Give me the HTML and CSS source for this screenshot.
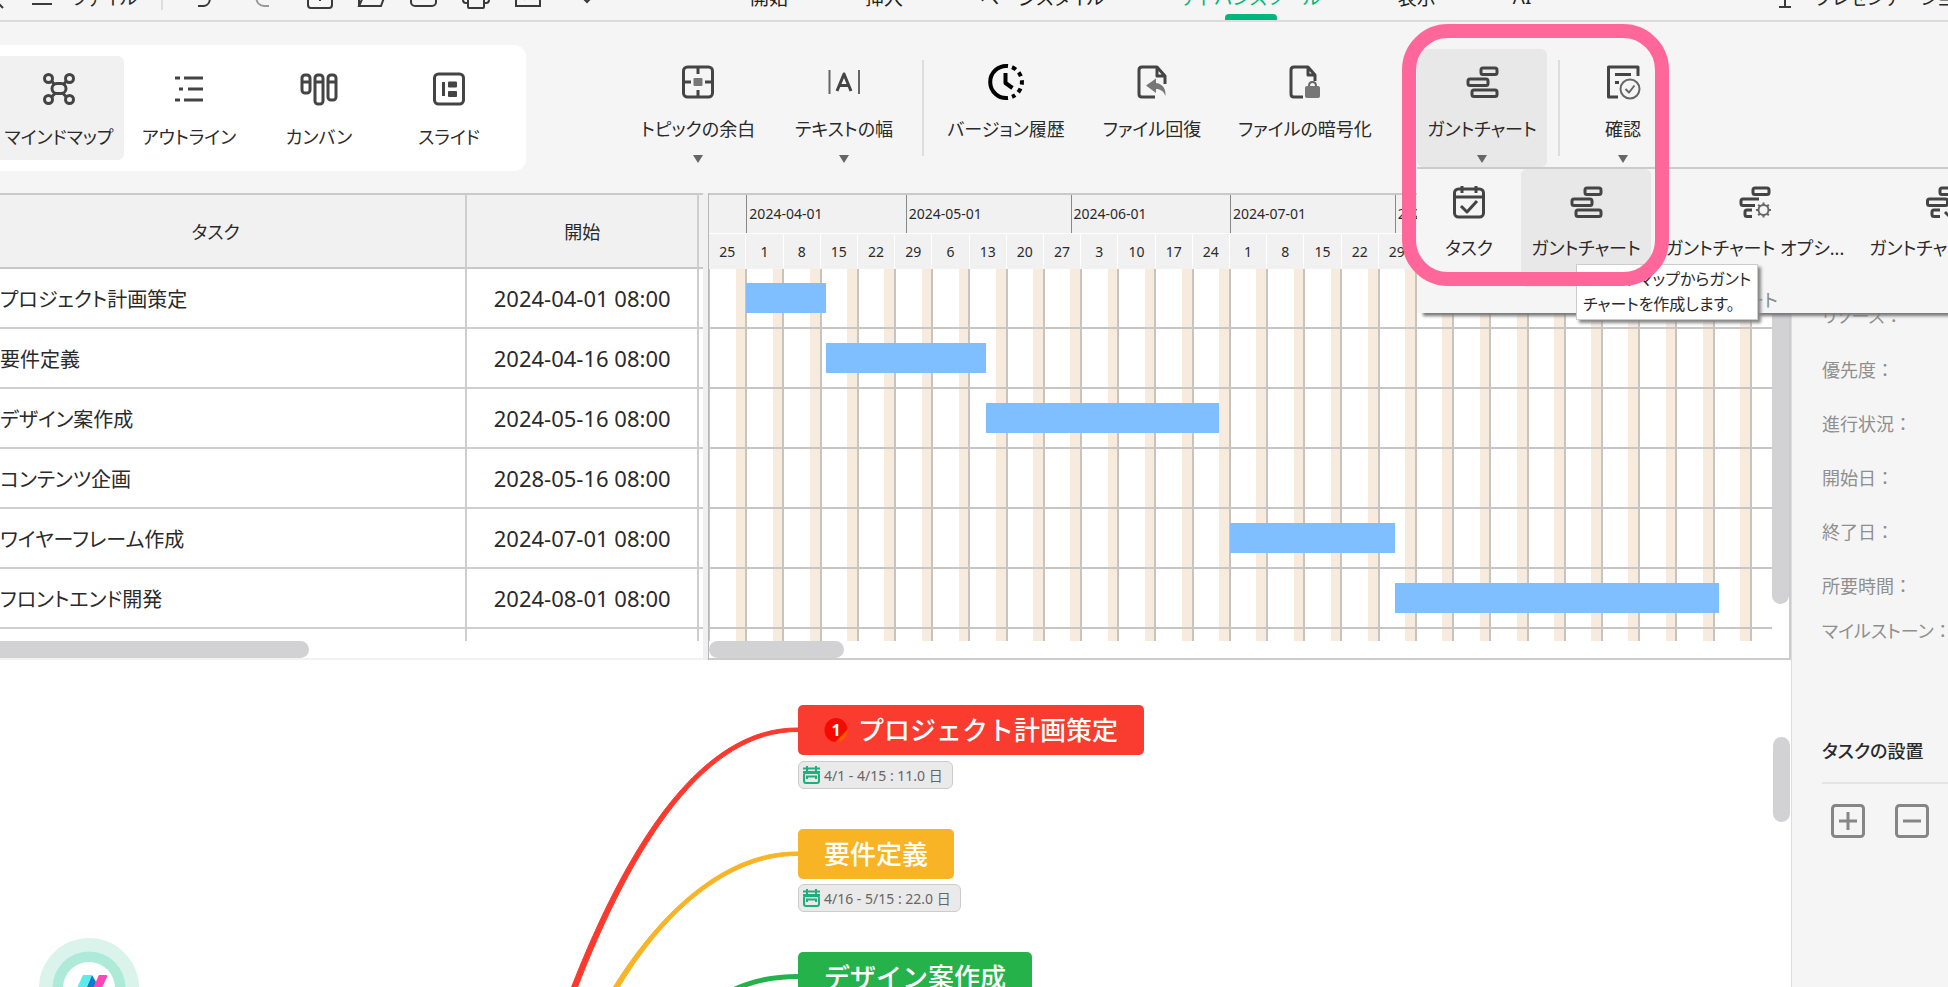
FILE: index.html
```html
<!DOCTYPE html>
<html lang="ja">
<head>
<meta charset="utf-8">
<title>マインドマップ - ガントチャート</title>
<link rel="stylesheet" href="styles.css">
</head>
<body>
<div class="app">
  <header class="topbar">
    <div class="topbar-left">
      <button class="icon-btn back" aria-label="戻る"><svg width="28" height="28" viewBox="0 0 28 28"><path d="M18 8l-8 8 9 9"/></svg></button>
      <button class="file-btn"><svg width="20" height="20" viewBox="0 0 20 20"><path d="M0 3h20M0 10h20M0 17h20"/></svg>ファイル</button>
      <span class="top-sep"></span>
      <button class="icon-btn wide" aria-label="元に戻す"><svg width="28" height="28" viewBox="0 0 28 28"><path d="M9 3L4 8l5 5M4 8h9c9 0 9 14 1 15h-6"/></svg></button>
      <button class="icon-btn wide dim" aria-label="やり直し"><svg width="28" height="28" viewBox="0 0 28 28"><path d="M19 3l5 5-5 5M24 8H15c-9 0-9 14 1 15h5"/></svg></button>
      <button class="icon-btn" aria-label="新規"><svg width="28" height="28" viewBox="0 0 28 28"><rect x="2" y="2" width="24" height="23" rx="3"/><path d="M14 8v10M9 13h10"/></svg></button>
      <button class="icon-btn" aria-label="開く"><svg width="28" height="28" viewBox="0 0 28 28"><path d="M1 23V4h9l3 4h10v4M1 23l5-11h21l-4 11z"/></svg></button>
      <button class="icon-btn" aria-label="保存"><svg width="28" height="28" viewBox="0 0 28 28"><rect x="1" y="2" width="25" height="21" rx="4"/></svg></button>
      <button class="icon-btn" aria-label="印刷"><svg width="28" height="28" viewBox="0 0 28 28"><path d="M6 9V2h16v7M6 20H4q-3 0-3-3V9h26v8q0 3-3 3h-2"/><rect x="6" y="14" width="16" height="11" rx="1"/></svg></button>
      <button class="icon-btn" aria-label="書き出し"><svg width="28" height="28" viewBox="0 0 28 28"><path d="M16 2H2v21h24V13M10 17c1-7 5-10 14-10M20 3l4 4-4 4"/></svg></button>
      <button class="icon-btn" aria-label="その他"><svg width="28" height="28" viewBox="0 0 28 28"><path d="M16 14l5 5 5-5"/></svg></button>
    </div>
    <nav class="tabs">
      <a href="#home">開始</a>
      <a href="#insert">挿入</a>
      <a href="#page">ページスタイル</a>
      <a href="#advance" class="current">アドバンスツール</a>
      <a href="#view">表示</a>
      <a href="#ai">AI</a>
    </nav>
    <button class="present"><svg width="14" height="28" viewBox="0 0 14 28"><path d="M7 2v22M1 24h12"/></svg>プレゼンテーション</button>
  </header>

  <section class="ribbon">
    <div class="views">
      <button class="tool view active">
        <svg class="ico" viewBox="0 0 32 32"><circle cx="5.500" cy="5.500" r="4"/><circle cx="26.500" cy="5.500" r="4"/><circle cx="5.500" cy="26.500" r="4"/><circle cx="26.500" cy="26.500" r="4"/><rect x="9" y="10.500" width="14" height="10" rx="5"/><path d="M8.500 8l3.500 4M23.500 8L20 12M8.500 24l4-4M23.500 24l-4-4"/></svg>
        <span>マインドマップ</span>
      </button>
      <button class="tool view">
        <svg class="ico" viewBox="0 0 32 32"><path d="M2 5h5M11 5h19M6 16h4M15 16h15M2 27h5M11 27h19"/></svg>
        <span>アウトライン</span>
      </button>
      <button class="tool view">
        <svg class="ico wide-ico" viewBox="0 0 38 32"><rect x="2" y="2" width="8" height="18" rx="3"/><rect x="15" y="2" width="8" height="29" rx="3"/><rect x="28" y="2" width="8" height="25" rx="3"/><path d="M2 9h8M15 9h8M28 9h8"/></svg>
        <span>カンバン</span>
      </button>
      <button class="tool view">
        <svg class="ico" viewBox="0 0 32 32"><rect x="1.500" y="1" width="29" height="30" rx="4"/><path d="M10.500 9v14"/><rect class="solid" x="15" y="8.500" width="9" height="6" rx="1"/><rect class="solid" x="15" y="18" width="9" height="6" rx="1"/></svg>
        <span>スライド</span>
      </button>
    </div>

    <div class="tools">
      <button class="tool">
        <svg class="ico" viewBox="0 0 32 32"><rect x="1.500" y="1" width="29" height="30" rx="4"/><path d="M16 1v7M16 24v7M1.500 16H9M23 16h7.500"/><rect class="soft" x="11.500" y="12" width="9" height="8" rx="1"/></svg>
        <span>トピックの余白</span><i class="caret"></i>
      </button>
      <button class="tool">
        <svg class="ico" viewBox="0 0 32 32"><path class="thin" d="M1.500 4v24M31 4v24"/><path d="M9 25L16 8l7 17M11.500 19.500h9"/></svg>
        <span>テキストの幅</span><i class="caret"></i>
      </button>
      <span class="sep"></span>
      <button class="tool">
        <svg class="ico clock" viewBox="0 0 36 36"><path d="M20 2.100a16 16 0 1 0 0 31.800"/><path d="M17.500 9v10l7 5"/><path stroke-dasharray="4.500 4" d="M24 3.200a16 16 0 0 1 0 29.600"/></svg>
        <span>バージョン履歴</span>
      </button>
      <button class="tool">
        <svg class="ico" viewBox="0 0 32 32"><path d="M19 31H6q-3 0-3-3V4q0-3 3-3h15l8 9v8M21 1v9h8"/><path class="soft" d="M10 19.500l10-7v4.500c7 1 10 6 9.500 13-2-5-5-7-9.500-7v4z"/></svg>
        <span>ファイル回復</span>
      </button>
      <button class="tool long">
        <svg class="ico" viewBox="0 0 32 32"><path d="M14 31H5q-3 0-3-3V4q0-3 3-3h14l7 8v6M19 1v8h7"/><path class="thin" d="M20 22v-2q0-4 3.500-4t3.500 4v2"/><rect class="soft" x="16" y="20" width="15" height="12" rx="2"/></svg>
        <span>ファイルの暗号化</span>
      </button>

      <div class="menu-wrap">
        <button class="tool gantt-btn active" aria-expanded="true">
          <svg class="ico" viewBox="0 0 32 32"><rect x="15" y="2" width="16" height="6.500" rx="2"/><rect x="2" y="13" width="20" height="6.500" rx="2"/><rect x="6" y="24" width="25" height="6.500" rx="2"/></svg>
          <span>ガントチャート</span><i class="caret"></i>
        </button>

        <div class="menu">
          <div class="menu-items">
            <button class="tool item-task">
              <svg class="ico" viewBox="0 0 32 32"><rect x="1.500" y="3" width="29" height="28" rx="4"/><path d="M1.500 11h29M9 0v7M23 0v7M8 20l6 6 10-11"/></svg>
              <span>タスク</span>
            </button>
            <button class="tool gantt-btn active">
              <svg class="ico" viewBox="0 0 32 32"><rect x="15" y="2" width="16" height="6.500" rx="2"/><rect x="2" y="13" width="20" height="6.500" rx="2"/><rect x="6" y="24" width="25" height="6.500" rx="2"/></svg>
              <span>ガントチャート</span>
            </button>
            <button class="tool item-option">
              <svg class="ico" viewBox="0 0 32 32"><rect x="14" y="2" width="16" height="6.500" rx="2"/><path d="M20 13H4q-2 0-2 2v2.500q0 2 2 2h12M13 24H8q-2 0-2 2v2.500q0 2 2 2h5"/><circle class="thin" cx="24.500" cy="24" r="5"/><path class="thin" d="M24.500 16.500V19M24.500 29v2.500M17 24h2.500M29.500 24H32M19.200 18.700l1.800 1.800M28 27.500l1.800 1.800M29.800 18.700L28 20.500M21 27.500l-1.800 1.800"/></svg>
              <span>ガントチャート オプシ...</span>
            </button>
            <button class="tool item-export">
              <svg class="ico" viewBox="0 0 32 32"><rect x="14" y="2" width="16" height="6.500" rx="2"/><rect x="1.500" y="13" width="20" height="6.500" rx="2"/><path d="M14 24H8q-2 0-2 2v2.500q0 2 2 2h6M24 18v12M19 26l5 5 5-5"/></svg>
              <span>ガントチャート出力</span>
            </button>
          </div>
          <p class="menu-title">ガントチャート</p>
        </div>
        <div class="tooltip" role="tooltip">マインドマップからガント<br>チャートを作成します。</div>
        <div class="highlight"></div>
      </div>

      <span class="sep"></span>
      <button class="tool check-btn">
        <svg class="ico" viewBox="0 0 32 32"><path d="M11 31H1.500V1H31v9M8 8.500h16M8 16.500h4"/><circle class="thin" cx="23" cy="23" r="9.500"/><path class="thin" d="M18.500 23l3.500 3.500 5.500-7"/></svg>
        <span>確認</span><i class="caret"></i>
      </button>
    </div>
  </section>

  <div class="workspace">
    <main class="center">
      <section class="planner">
        <div class="sheet-pane">
          <table class="sheet">
            <colgroup><col class="c-task"><col class="c-start"><col class="c-rest"></colgroup>
            <thead><tr><th class="h-task">タスク</th><th>開始</th><th></th></tr></thead>
            <tbody>
              <tr><td>プロジェクト計画策定</td><td class="date">2024-04-01 08:00</td><td></td></tr>
              <tr><td>要件定義</td><td class="date">2024-04-16 08:00</td><td></td></tr>
              <tr><td>デザイン案作成</td><td class="date">2024-05-16 08:00</td><td></td></tr>
              <tr><td>コンテンツ企画</td><td class="date">2028-05-16 08:00</td><td></td></tr>
              <tr><td>ワイヤーフレーム作成</td><td class="date">2024-07-01 08:00</td><td></td></tr>
              <tr><td>フロントエンド開発</td><td class="date">2024-08-01 08:00</td><td></td></tr>
              <tr class="tail"><td></td><td></td><td></td></tr>
            </tbody>
          </table>
          <div class="hscroll sheet-scroll"></div>
        </div>
        <div class="splitter"></div>
        <div class="gantt">
          <div class="gantt-head">
            <div class="months"><span></span><span>2024-04-01</span><span>2024-05-01</span><span>2024-06-01</span><span>2024-07-01</span><span>2024-08-01</span></div>
            <div class="weeks"><span>25</span><span>1</span><span>8</span><span>15</span><span>22</span><span>29</span><span>6</span><span>13</span><span>20</span><span>27</span><span>3</span><span>10</span><span>17</span><span>24</span><span>1</span><span>8</span><span>15</span><span>22</span><span>29</span><span>5</span><span>12</span><span>19</span><span>26</span><span>2</span><span>9</span><span>16</span><span>23</span><span>30</span><span></span></div>
          </div>
          <div class="gantt-body">
            <div class="plot">
              <div class="lane"><div class="bar" style="grid-column: 8 / 23"></div></div>
              <div class="lane"><div class="bar" style="grid-column: 23 / 53"></div></div>
              <div class="lane"><div class="bar" style="grid-column: 53 / 97"></div></div>
              <div class="lane"></div>
              <div class="lane"><div class="bar" style="grid-column: 99 / 130"></div></div>
              <div class="lane"><div class="bar" style="grid-column: 130 / 191"></div></div>
            </div>
            <div class="vscroll"></div>
          </div>
          <div class="hscroll gantt-scroll"></div>
        </div>
      </section>

      <section class="canvas">
        <svg class="links" width="260" height="330" viewBox="540 661 260 330">
          <path stroke="#fa3a2f" fill="#fa3a2f" stroke-width="1" d="M798 729C704 728 630 838 570 992L576 992C634 842 706 732 798 732.500Z"/>
          <path stroke="#f8b425" fill="#f8b425" stroke-width="1" d="M798 853C725 852 659 913 611 992L617 992C661 917 726 856 798 856.500Z"/>
          <path stroke="#26b24b" fill="none" stroke-width="5" d="M798 977.500C775 977.500 755 981 735 990"/>
        </svg>
        <div class="node node-1"><svg width="24" height="26" viewBox="0 0 24 26"><defs><linearGradient id="g" x1="0" y1="0" x2="1" y2="1"><stop offset=".72" stop-color="#f40a00"/><stop offset=".76" stop-color="#ff5a00"/></linearGradient></defs><ellipse cx="12" cy="13" rx="11.500" ry="12" fill="url(#g)"/><text x="12" y="19" text-anchor="middle" class="badge-num">1</text></svg>プロジェクト計画策定</div>
        <div class="tag tag-1"><svg width="17" height="18" viewBox="0 0 17 18"><path d="M0 2.500h17M0 6h17M4 0v5M13 0v5M4 13v-2.500h9V13"/><rect x="1" y="7" width="15" height="10" rx="2"/></svg>4/1 - 4/15 : 11.0 日</div>
        <div class="node node-2">要件定義</div>
        <div class="tag tag-2"><svg width="17" height="18" viewBox="0 0 17 18"><path d="M0 2.500h17M0 6h17M4 0v5M13 0v5M4 13v-2.500h9V13"/><rect x="1" y="7" width="15" height="10" rx="2"/></svg>4/16 - 5/15 : 22.0 日</div>
        <div class="node node-3">デザイン案作成</div>
        <button class="assistant" aria-label="アシスタント"><svg width="100" height="100" viewBox="0 0 100 100"><circle cx="50" cy="50" r="50" fill="#daf3eb"/><circle cx="50" cy="50" r="36.500" fill="#aeead8"/><circle cx="50" cy="50" r="26" fill="#fff"/><path fill="#5cebeb" d="M44 37h9l-12 26h-9z"/><path fill="#0a7fce" d="M53 37l4 7-6 17-7-3z"/><path fill="#ff45b8" d="M60 37h7q2 0 1 2L57 63h-9z"/></svg></button>
        <div class="canvas-scroll"></div>
      </section>
    </main>

    <aside class="side">
      <ul class="props">
        <li>リソース<span>：</span></li><li>優先度<span>：</span></li><li>進行状況<span>：</span></li><li>開始日<span>：</span></li><li>終了日<span>：</span></li><li>所要時間<span>：</span></li><li class="last">マイルストーン<span>：</span></li>
      </ul>
      <h2>タスクの設置</h2>
      <div class="side-actions">
        <button aria-label="追加"><svg width="34" height="34" viewBox="0 0 34 34"><rect x="1.500" y="1.500" width="31" height="31" rx="3"/><path d="M8 17h18M17 8v18"/></svg></button>
        <button aria-label="削除"><svg width="34" height="34" viewBox="0 0 34 34"><rect x="1.500" y="1.500" width="31" height="31" rx="3"/><path d="M8 17h18"/></svg></button>
      </div>
    </aside>
  </div>
</div>
</body>
</html>
```

FILE: styles.css
```css
* { box-sizing: border-box; }

body {
  margin: 0;
  background: #f5f5f5;
  color: #2a2a2a;
  font-family: "Noto Sans", "Noto Sans CJK JP", sans-serif;
  font-size: 18px;
  font-feature-settings: "palt";
  overflow: hidden;
}

button {
  margin: 0;
  padding: 0;
  border: 0;
  background: none;
  color: inherit;
  font: inherit;
  font-feature-settings: inherit;
  white-space: nowrap;
}

svg { display: block; flex: none; overflow: visible; }

.app {
  display: flex;
  flex-direction: column;
  height: 100vh;
  overflow: hidden;
}

/* top bar, scrolled partly out of view */
.topbar {
  display: flex;
  align-items: center;
  flex: none;
  height: 48px;
  margin-top: -26px;
  border-bottom: 2px solid #dcdcdc;
  font-size: 19px;
}
.topbar svg {
  fill: none;
  stroke: #3a3a3a;
  stroke-width: 2;
}
.topbar-left {
  display: flex;
  align-items: center;
  flex: none;
  gap: 24px;
  width: 750px;
}
.back { margin-left: -16px; margin-right: -4px; }
.file-btn { display: flex; align-items: center; gap: 20px; margin-right: -1px; }
.top-sep { width: 2px; height: 26px; background: #ddd; margin-right: 3px; }
.icon-btn.wide { margin-right: 6px; }
.icon-btn.dim svg { stroke: #999; }

.tabs { display: flex; align-self: stretch; gap: 77px; }
.tabs a {
  position: relative;
  display: flex;
  align-items: center;
  color: #222;
  text-decoration: none;
  white-space: nowrap;
}
.tabs .current { color: #00b67a; }
.tabs .current::after {
  content: "";
  position: absolute;
  left: calc(50% - 26px);
  bottom: 0;
  width: 52px;
  height: 6px;
  border-radius: 4px 4px 0 0;
  background: #00b67a;
}
.present {
  display: flex;
  align-items: center;
  justify-content: flex-start;
  flex: none;
  gap: 23px;
  width: 170px;
  margin-left: auto;
}

/* ribbon */
.ribbon {
  display: flex;
  align-items: flex-start;
  flex: none;
  height: 171px;
}
.views {
  display: flex;
  flex: none;
  margin: 23px 0 0 -6px;
  padding: 11px 12px 11px 0;
  border-radius: 0 12px 12px 0;
  background: #fff;
}
.tool {
  display: flex;
  flex-direction: column;
  align-items: center;
  flex: none;
  width: 146px;
  height: 118px;
  padding-top: 17px;
  border-radius: 6px;
  line-height: 24px;
}
.tool span { margin-top: 19px; }
.tool.view { width: 130px; height: 104px; }
.tool.view span { margin-top: 20px; }
.tool.active { background: #e8e8e8; }
.tool.view.active { background: #f1f1f1; }

.ico {
  width: 32px;
  height: 32px;
  fill: none;
  stroke: #444;
  stroke-width: 3;
  stroke-linejoin: round;
}
.wide-ico { width: 38px; }
.ico .thin { stroke: #666; stroke-width: 2; }
.ico .solid { fill: #444; stroke: none; }
.ico .soft { fill: #777; stroke: none; }
.ico.clock { width: 36px; height: 36px; margin: -2px; stroke: #000; stroke-width: 4; }
.caret {
  width: 10px;
  height: 8px;
  margin-top: 14px;
  background: #666;
  clip-path: polygon(0 0, 100% 0, 50% 100%);
}

.tools { display: flex; margin: 27px 0 0 99px; }
.sep { flex: none; width: 2px; height: 96px; margin: 11px 9px 0 5px; background: #ddd; }
.tool.long { width: 160px; }
.tool.gantt-btn { width: 130px; }
.tool.check-btn { width: 108px; }
.menu-wrap { position: relative; margin: 0 6px 0 32px; }

.menu {
  position: absolute;
  z-index: 2;
  top: 118px;
  left: 0;
  width: 612px;
  height: 146px;
  border-top: 2px solid #cbcbcb;
  background: #f5f5f5;
  box-shadow: 6px 3px 3px #777;
}
.menu-items { display: flex; }
.item-task.tool { width: 104px; }
.item-option.tool { width: 208px; }
.item-export.tool { width: 166px; }
.menu .tool span { margin-top: 18px; }
.menu-title {
  margin: 0;
  color: #8a8a8a;
  text-align: center;
  line-height: 26px;
}
.tooltip {
  position: absolute;
  z-index: 3;
  top: 215px;
  left: 159px;
  padding: 2px 6px;
  border: 1px solid #ccc;
  background: #fff;
  box-shadow: 3px 3px 3px #888;
  font-size: 16px;
  line-height: 25px;
  white-space: nowrap;
}
.highlight {
  position: absolute;
  z-index: 4;
  top: -25px;
  left: -15px;
  width: 267px;
  height: 262px;
  border: 14px solid #ff6699;
  border-radius: 46px;
  pointer-events: none;
}

/* work area */
.workspace { display: flex; flex: 1; min-height: 0; }
.center { display: flex; flex-direction: column; flex: 1; min-width: 0; }

.planner {
  display: grid;
  grid-template-columns: minmax(0, 13fr) 6px minmax(0, 20fr);
  flex: none;
  background: #fff;
}
.sheet-pane { border-bottom: 2px solid #f2f2f2; }
.sheet {
  width: 100%;
  table-layout: fixed;
  border-collapse: separate;
  border-spacing: 0;
}
.c-start { width: 232px; }
.c-rest { width: 4px; }
.sheet th {
  height: 76px;
  padding: 0;
  border-top: 2px solid #c9c9c9;
  border-bottom: 2px solid #c9c9c9;
  background: #f1f1f1;
  font-weight: 400;
}
.sheet .h-task { padding-right: 34px; }
.sheet td {
  height: 60px;
  padding: 0;
  border-bottom: 2px solid #cecece;
  font-size: 20px;
  white-space: nowrap;
}
.sheet th:not(:last-child), .sheet td:not(:last-child) { border-right: 2px solid #cecece; }
.sheet .date { font-size: 22px; text-align: center; }
.sheet .tail td { height: 12px; border-bottom: 0; }

.hscroll { height: 17px; background: #d2d2d4; }
.sheet-scroll { width: 44%; border-radius: 0 9px 9px 0; }
.gantt-scroll { width: 135px; border-radius: 9px; }

.splitter { border-right: 1px solid #b8b8b8; background: #f0f0f0; }

.gantt {
  border-right: 2px solid #ccc;
  border-bottom: 2px solid #ccc;
  font-size: 14px;
}
.gantt-head {
  height: 76px;
  padding-right: 17px;
  border-top: 2px solid #c9c9c9;
  background: #f1f1f1;
}
.months {
  display: grid;
  grid-template-columns: 7fr 30fr 31fr 30fr 31fr 71fr;
  height: 38px;
  line-height: 38px;
}
.months span { min-width: 0; padding-left: 2px; }
.months span + span { border-left: 1px solid #888; }
.weeks {
  display: grid;
  grid-template-columns: repeat(28, minmax(0, 7fr)) minmax(0, 4fr);
  height: 36px;
  border-top: 1px solid #fff;
  line-height: 36px;
  text-align: center;
}
.weeks span { border-right: 1px solid #fff; }
.gantt-body { display: grid; grid-template-columns: minmax(0, 1fr) 17px; }
/* one tile is a week: five white days, a tinted weekend, half a line on each side */
.plot {
  padding-bottom: 12px;
  background: repeating-linear-gradient(to right, #c9c3bd 0 1px, #fff 1px 2.5%, #f7ebde 2.5% calc(3.5% - 1px), #c9c3bd calc(3.5% - 1px) 3.5%);
}
.lane {
  display: grid;
  grid-template-columns: repeat(200, minmax(0, 1fr));
  height: 60px;
  border-bottom: 2px solid #c8c6c4;
}
.bar { height: 30px; margin-top: 14px; background: #80bfff; }
.vscroll { height: 335px; border-radius: 0 0 9px 9px; background: #d2d2d4; }

/* mind map */
.canvas {
  position: relative;
  flex: 1;
  min-height: 0;
  overflow: hidden;
  background: #fff;
}
.links { position: absolute; left: 540px; top: 0; }
.node {
  position: absolute;
  left: 798px;
  display: flex;
  align-items: center;
  gap: 10px;
  height: 50px;
  padding: 0 26px;
  border-radius: 5px;
  color: #fff;
  font-size: 26px;
  font-weight: 500;
  font-feature-settings: normal;
  line-height: 48px;
  white-space: nowrap;
}
.node-1 { top: 45px; background: #fa3b2f; }
.node-2 { top: 169px; background: #f8b425; }
.node-3 { top: 292px; background: #26b24b; }
.badge-num { fill: #fff; font-size: 16px; font-weight: 700; }
.tag {
  position: absolute;
  left: 798px;
  display: flex;
  align-items: center;
  gap: 4px;
  height: 28px;
  padding: 0 9px 0 4px;
  border: 1px solid #ccc;
  border-radius: 6px;
  background: #eaeaea;
  color: #666;
  font-size: 14px;
  white-space: nowrap;
}
.tag svg { fill: none; stroke: #1faf7f; stroke-width: 2; }
.tag-1 { top: 101px; }
.tag-2 { top: 224px; }
.assistant { position: absolute; left: 39px; top: 278px; }
.canvas-scroll {
  position: absolute;
  right: 1px;
  top: 77px;
  width: 17px;
  height: 85px;
  border-radius: 9px;
  background: #d2d2d4;
}

/* property panel */
.side {
  flex: 0 0 157px;
  padding: 96px 0 0 30px;
  border-left: 1px solid #ddd;
  overflow: hidden;
}
.props {
  margin: 0;
  padding: 0;
  color: #8f8f8f;
  line-height: 54px;
  list-style: none;
  white-space: nowrap;
}
.props span { font-feature-settings: normal; }
.props .last { line-height: 36px; }
.side h2 {
  margin: 90px 0 20px;
  padding-bottom: 19px;
  border-bottom: 2px solid #e4e4e4;
  font-size: 18px;
  font-weight: 500;
  line-height: 24px;
  white-space: nowrap;
}
.side-actions { display: flex; gap: 30px; padding-left: 9px; }
.side-actions svg { fill: none; stroke: #868686; stroke-width: 3; }
```
